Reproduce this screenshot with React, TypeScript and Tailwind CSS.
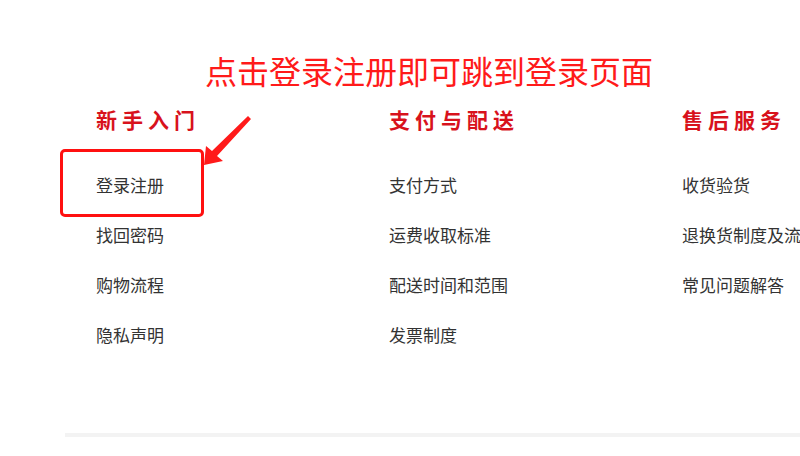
import React from 'react';

// Footer help links, three columns
const columns: { title: string; links: string[] }[] = [
  { title: '新手入门', links: ['登录注册', '找回密码', '购物流程', '隐私声明'] },
  { title: '支付与配送', links: ['支付方式', '运费收取标准', '配送时间和范围', '发票制度'] },
  { title: '售后服务', links: ['收货验货', '退换货制度及流程', '常见问题解答'] },
];

const font = { fontFamily: '"Microsoft YaHei", "Noto Sans CJK SC", sans-serif' };

export default function App() {
  return (
    <div className="relative w-[800px] h-[456px] overflow-hidden bg-white" style={font}>
      {/* annotation caption */}
      <div className="pt-[50px] pl-[205px] text-[32px] leading-[40px] text-[#ff1a1a] whitespace-nowrap">
        点击登录注册即可跳到登录页面
      </div>

      <div className="flex mt-[9px] pl-[96px]">
        {columns.map((col) => (
          <div key={col.title} className="w-[293px] shrink-0">
            <div className="h-[40px] leading-[40px] text-[21px] font-bold tracking-[5px] text-[#d8121c] whitespace-nowrap">
              {col.title}
            </div>
            <ul className="mt-[21px]">
              {col.links.map((l) => (
                <li key={l} className="h-[50px] leading-[50px] text-[17px] text-[#333333] whitespace-nowrap">
                  {l}
                </li>
              ))}
            </ul>
          </div>
        ))}
      </div>

      <div className="mt-[73px] ml-[65px] h-[4px] bg-[#f3f3f3]" />

      {/* highlight box + arrow over the first link */}
      <div className="absolute left-[60px] top-[149px] w-[144px] h-[68px] border-[3px] border-[#ff1010] rounded-[5px]" />
      <svg className="absolute left-0 top-0" width="800" height="456" viewBox="0 0 800 456">
        <polygon
          points="204,165 206,146 212,151 248,116 251,119 217,156 223,161"
          fill="#ff1a1a"
        />
      </svg>
    </div>
  );
}
